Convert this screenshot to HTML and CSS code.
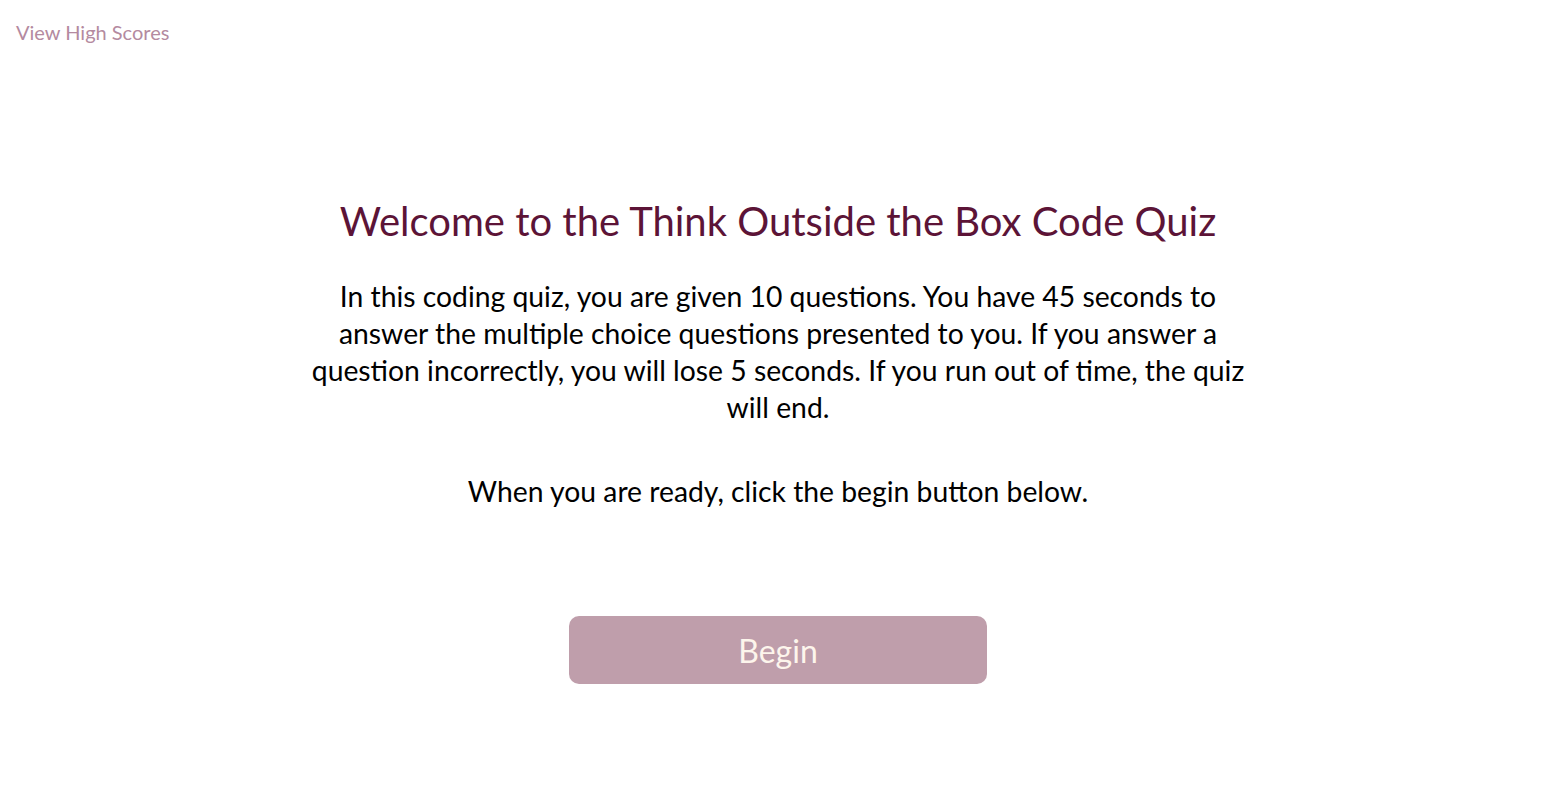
FILE: index.html
```html
<!DOCTYPE html>
<html lang="en">
<head>
<meta charset="utf-8">
<title>Code Quiz</title>
<link rel="stylesheet" href="styles.css">
</head>
<body>
<header class="topbar">
  <a class="scores-link" href="#">View High Scores</a>
</header>
<main class="intro">
  <h1 class="intro-title">Welcome to the Think Outside the Box Code Quiz</h1>
  <p class="intro-text">In this coding quiz, you are given 10 questions. You have 45 seconds to answer the multiple choice questions presented to you. If you answer a question incorrectly, you will lose 5 seconds. If you run out of time, the quiz will end.</p>
  <p class="intro-text">When you are ready, click the begin button below.</p>
  <button class="begin-btn" type="button">Begin</button>
</main>
</body>
</html>
```
FILE: styles.css
```css
* { box-sizing: border-box; }
html, body { margin: 0; padding: 0; background: #ffffff; }
body {
  font-family: "Source Sans Pro", "Lato", "Liberation Sans", sans-serif;
  color: #000;
}
.topbar {
  padding: 19px 16px 0;
  height: 46px;
}
.scores-link {
  font-size: 20px;
  color: #b48aa0;
  text-decoration: none;
  line-height: 26px;
}
.intro {
  width: 950px;
  margin: 0 auto;
  padding-top: 151px;
  display: flex;
  flex-direction: column;
  align-items: center;
  text-align: center;
}
.intro-title {
  margin: 0;
  font-size: 40px;
  font-weight: 400;
  color: #5c1437;
  line-height: 48px;
}
.intro-text {
  margin: 33px 0 0;
  font-size: 28.3px;
  line-height: 37px;
}
.intro-text + .intro-text { margin-top: 47px; }
.begin-btn {
  margin-top: 106px;
  width: 418px;
  height: 68px;
  border: none;
  border-radius: 10px;
  background: #bf9eab;
  color: #fdf5ec;
  font-family: inherit;
  font-size: 32px;
}
```
